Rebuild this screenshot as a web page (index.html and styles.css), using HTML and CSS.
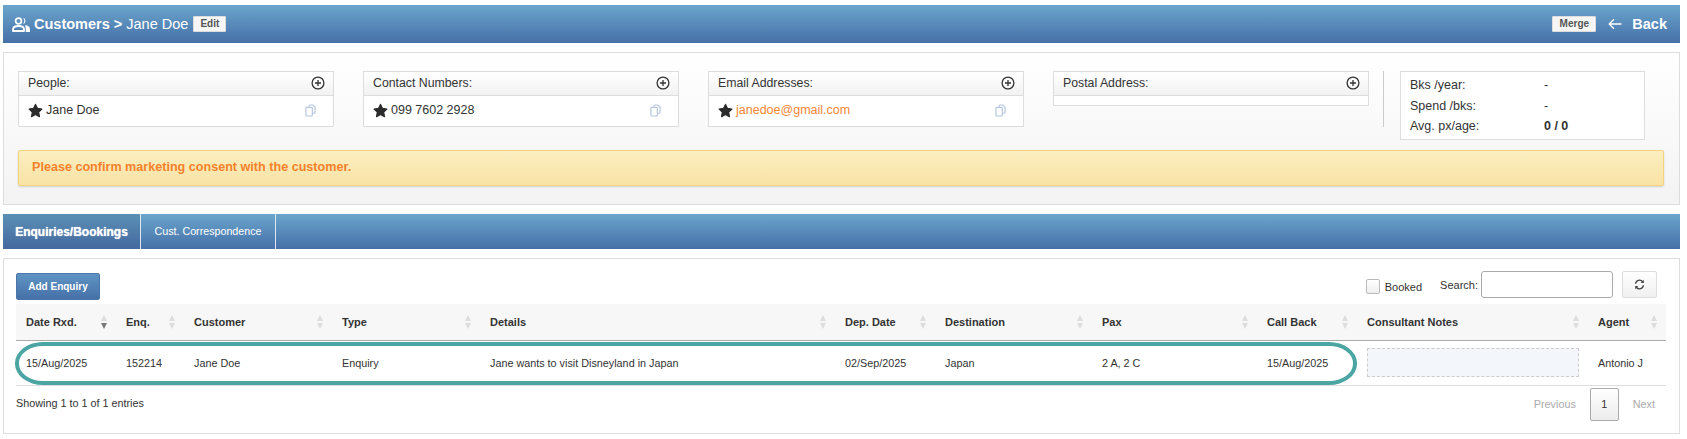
FILE: index.html
```html
<!DOCTYPE html>
<html>

<head>
	<title>Customers - Jane Doe</title>
	<meta charset="utf-8">
	<link rel="stylesheet" href="styles.css">
</head>

<body>
	<svg class="defs">
		<symbol id="star" viewBox="0 0 16 16">
			<polygon points="8,1.5 10.200,5.800 14.800,6.500 11.400,9.800 12.200,14.500 8,12.200 3.800,14.500 4.600,9.800 1.200,6.500 5.800,5.800" fill="#2b2b2b" stroke="#2b2b2b" stroke-width="1.300" stroke-linejoin="round" />
		</symbol>
		<symbol id="plus" viewBox="0 0 14 14">
			<circle cx="7" cy="7" r="5.900" fill="none" stroke="#333" stroke-width="1.300" />
			<path d="M7 4v6M4 7h6" stroke="#333" stroke-width="1.300" />
		</symbol>
		<symbol id="copy" viewBox="0 0 12 14">
			<path d="M4.500 3V2a1 1 0 0 1 1-1h3l2.500 2.500V9a1 1 0 0 1-1 1H8.500" fill="none" stroke="#b5c6e0" stroke-width="1.300" />
			<rect x="1" y="3.500" width="7" height="9.500" rx="1" fill="#fff" stroke="#b5c6e0" stroke-width="1.300" />
		</symbol>
	</svg>

	<div class="page">
		<div class="titlebar">
			<div class="title">
				<svg class="users-icon" viewBox="0 0 18 15">
					<circle cx="6.500" cy="4" r="2.900" fill="none" stroke="#fff" stroke-width="1.800" />
					<path d="M1 14v-1.500c0-2.400 2-3.500 5.500-3.500s5.500 1.100 5.500 3.500V14z" fill="none" stroke="#fff" stroke-width="1.800" stroke-linejoin="round" />
					<path d="M11 .8a3.300 3.300 0 0 1 0 6.400 5 5 0 0 0 0-6.400zM13 8.300c2.800.2 5 1.400 5 3.800V15h-4.300v-2.600c0-1.700-.2-2.900-.7-4.100z" fill="#fff" />
				</svg>
				<b>Customers &gt;</b> <span>Jane Doe</span>
				<button class="small-btn">Edit</button>
			</div>
			<div class="title-right">
				<button class="small-btn merge">Merge</button>
				<svg class="back-arrow" viewBox="0 0 14 12">
					<path d="M13.500 6H1.500M6 1.200 1.200 6 6 10.800" fill="none" stroke="#fff" stroke-width="1.300" />
				</svg>
				<b class="back">Back</b>
			</div>
		</div>

		<div class="info-panel">
			<div class="info-row">
				<div class="card">
					<div class="card-head">People:<svg class="plus"><use href="#plus" /></svg></div>
					<div class="card-body">
						<svg class="star"><use href="#star" /></svg>
						<span class="value">Jane Doe</span>
						<svg class="copy"><use href="#copy" /></svg>
					</div>
				</div>
				<div class="card">
					<div class="card-head">Contact Numbers:<svg class="plus"><use href="#plus" /></svg></div>
					<div class="card-body">
						<svg class="star"><use href="#star" /></svg>
						<span class="value">099 7602 2928</span>
						<svg class="copy"><use href="#copy" /></svg>
					</div>
				</div>
				<div class="card">
					<div class="card-head">Email Addresses:<svg class="plus"><use href="#plus" /></svg></div>
					<div class="card-body">
						<svg class="star"><use href="#star" /></svg>
						<span class="value email">janedoe@gmail.com</span>
						<svg class="copy"><use href="#copy" /></svg>
					</div>
				</div>
				<div class="card">
					<div class="card-head">Postal Address:<svg class="plus"><use href="#plus" /></svg></div>
					<div class="card-body empty"></div>
				</div>
				<div class="divider"></div>
				<div class="stats">
					<div>Bks /year:</div>
					<div>-</div>
					<div>Spend /bks:</div>
					<div>-</div>
					<div>Avg. px/age:</div>
					<div class="strong">0 / 0</div>
				</div>
			</div>
			<div class="alert">Please confirm marketing consent with the customer.</div>
		</div>

		<div class="tabbar">
			<div class="tab active">Enquiries/Bookings</div>
			<div class="tab">Cust. Correspondence</div>
		</div>

		<div class="list-panel">
			<div class="toolbar">
				<button class="add-btn">Add Enquiry</button>
				<div class="filters">
					<span class="checkbox"></span>
					<span class="booked">Booked</span>
					<span class="search-label">Search:</span>
					<span class="search-box"></span>
					<button class="refresh-btn">
						<svg viewBox="0 0 14 14">
							<path d="M2 6a5 5 0 0 1 9-2.500M12 8a5 5 0 0 1-9 2.500" fill="none" stroke="#444" stroke-width="1.700" />
							<path d="M12.500 1v4h-4zM1.500 13V9h4z" fill="#444" />
						</svg>
					</button>
				</div>
			</div>

			<div class="table-wrap">
				<table>
					<colgroup>
						<col class="c-date">
						<col class="c-enq">
						<col class="c-cust">
						<col class="c-type">
						<col class="c-details">
						<col class="c-dep">
						<col class="c-dest">
						<col class="c-pax">
						<col class="c-call">
						<col class="c-notes">
						<col class="c-agent">
					</colgroup>
					<thead>
						<tr>
							<th><div class="th-in">Date Rxd.<span class="sort desc"></span></div></th>
							<th><div class="th-in">Enq.<span class="sort"></span></div></th>
							<th><div class="th-in">Customer<span class="sort"></span></div></th>
							<th><div class="th-in">Type<span class="sort"></span></div></th>
							<th><div class="th-in">Details<span class="sort"></span></div></th>
							<th><div class="th-in">Dep. Date<span class="sort"></span></div></th>
							<th><div class="th-in">Destination<span class="sort"></span></div></th>
							<th><div class="th-in">Pax<span class="sort"></span></div></th>
							<th><div class="th-in">Call Back<span class="sort"></span></div></th>
							<th><div class="th-in">Consultant Notes<span class="sort"></span></div></th>
							<th><div class="th-in">Agent<span class="sort"></span></div></th>
						</tr>
					</thead>
					<tbody>
						<tr>
							<td>15/Aug/2025</td>
							<td>152214</td>
							<td>Jane Doe</td>
							<td>Enquiry</td>
							<td>Jane wants to visit Disneyland in Japan</td>
							<td>02/Sep/2025</td>
							<td>Japan</td>
							<td>2 A, 2 C</td>
							<td>15/Aug/2025</td>
							<td><div class="notes"></div></td>
							<td>Antonio J</td>
						</tr>
					</tbody>
				</table>
				<div class="highlight"></div>
			</div>

			<div class="table-foot">
				<div>Showing 1 to 1 of 1 entries</div>
				<div class="pager">
					<span class="page-link">Previous</span>
					<span class="page-num">1</span>
					<span class="page-link">Next</span>
				</div>
			</div>
		</div>
	</div>
</body>

</html>
```

FILE: styles.css
```css
body {
	margin: 0;
	background: #fff;
	color: #333;
	font-family: "Liberation Sans", Arial, sans-serif;
	font-size: 12px;
}

.defs {
	display: none;
}

.page {
	padding: 5px 7px 4px 3px;
}

.titlebar {
	height: 38px;
	padding: 0 13px 0 9px;
	display: flex;
	align-items: center;
	justify-content: space-between;
	color: white;
	font-size: 14.500px;
	background: linear-gradient(#6ba5cc, #4570a8);
}

.title {
	display: flex;
	align-items: center;
	gap: 4px;
}

.users-icon {
	width: 18px;
	height: 15px;
}

.small-btn {
	height: 16px;
	padding: 0 6px;
	border: 1px solid #ddd;
	border-radius: 1px;
	background: #f6f6f6;
	color: #555;
	font-family: inherit;
	font-size: 10px;
	font-weight: bold;
	line-height: 14px;
}

.title .small-btn {
	margin-left: 1px;
	width: 33px;
	padding: 0;
}

.title-right {
	display: flex;
	align-items: center;
}

.merge {
	width: 44px;
	padding: 0;
}

.back-arrow {
	width: 14px;
	height: 12px;
	margin-left: 12px;
}

.back {
	margin-left: 10px;
}

.info-panel {
	margin-top: 9px;
	height: 153px;
	box-sizing: border-box;
	padding: 18px 15px 0 14px;
	border: 1px solid #ddd;
	background: linear-gradient(#fff, #f3f3f3);
}

.info-row {
	display: flex;
	align-items: flex-start;
	height: 69px;
}

.card {
	width: 316px;
	box-sizing: border-box;
	margin-right: 29px;
	border: 1px solid #ddd;
	background: #fff;
}

.card:nth-child(4) {
	margin-right: 14px;
}

.card-head {
	height: 24px;
	box-sizing: border-box;
	padding: 0 8px 2px 9px;
	display: flex;
	align-items: center;
	justify-content: space-between;
	border-bottom: 1px solid #ddd;
	background: linear-gradient(#fff, #f2f2f2);
	color: #333;
	font-size: 12.300px;
}

.plus {
	width: 14px;
	height: 14px;
}

.card-body {
	height: 30px;
	box-sizing: border-box;
	padding: 0 17px 2px 9px;
	display: flex;
	align-items: center;
	font-size: 12.500px;
}

.card-body.empty {
	height: 9px;
}

.star {
	width: 15px;
	height: 15px;
	margin-right: 3px;
}

.value {
	flex: 1;
}

.email {
	color: #f58634;
}

.copy {
	width: 11px;
	height: 13px;
}

.divider {
	width: 1px;
	height: 56px;
	background: #ccc;
	margin-right: 16px;
}

.stats {
	width: 245px;
	height: 69px;
	box-sizing: border-box;
	padding: 3px 9px;
	display: grid;
	grid-template-columns: 134px auto;
	grid-auto-rows: 20.500px;
	align-items: center;
	border: 1px solid #ddd;
	background: #fff;
	font-size: 12.500px;
}

.strong {
	font-weight: bold;
}

.alert {
	margin-top: 10px;
	height: 36px;
	box-sizing: border-box;
	padding: 0 0 2px 13px;
	display: flex;
	align-items: center;
	border: 1px solid #f5d27e;
	border-radius: 2px;
	background: linear-gradient(#fbeec0, #f9e3a6);
	box-shadow: 0 1px 2px rgba(0, 0, 0, 0.15);
	color: #f5822a;
	font-size: 12.600px;
	font-weight: bold;
}

.tabbar {
	margin-top: 9px;
	height: 35px;
	display: flex;
	background: linear-gradient(#6ba5cc, #4570a8);
}

.tab {
	width: 134px;
	padding-bottom: 2px;
	display: flex;
	align-items: center;
	justify-content: center;
	border-right: 1px solid #dfe8f2;
	color: white;
	font-size: 10.700px;
}

.tab.active {
	width: 137px;
	padding-top: 1px;
	padding-bottom: 0;
	background: linear-gradient(#5a90b5, #44699f);
	font-weight: bold;
	font-size: 12px;
	text-shadow: 0 0 1px #fff;
}

.list-panel {
	margin-top: 9px;
	height: 176px;
	box-sizing: border-box;
	padding: 12px 13px 0 12px;
	border: 1px solid #ddd;
}

.toolbar {
	height: 33px;
	display: flex;
	justify-content: space-between;
	align-items: flex-start;
}

.add-btn {
	margin-top: 2px;
	width: 84px;
	height: 27px;
	padding: 0;
	border: 1px solid #4a76ad;
	border-radius: 2px;
	background: linear-gradient(#5f94c2, #4570a8);
	color: white;
	font-family: inherit;
	font-size: 10px;
	font-weight: bold;
}

.filters {
	display: flex;
	align-items: center;
	font-size: 11px;
	padding-right: 9px;
}

.checkbox {
	width: 14px;
	height: 15px;
	box-sizing: border-box;
	margin-top: 3px;
	border: 1px solid #bbb;
	border-radius: 2px;
	background: linear-gradient(#fff, #eee);
}

.booked {
	margin: 5px 0 0 5px;
}

.search-label {
	margin: 0 3px 0 18px;
}

.search-box {
	width: 130px;
	height: 25px;
	border: 1px solid #aaa;
	border-radius: 3px;
	background: #fff;
}

.refresh-btn {
	margin-left: 9px;
	width: 35px;
	height: 27px;
	padding: 0;
	display: flex;
	align-items: center;
	justify-content: center;
	border: 1px solid #ddd;
	border-radius: 2px;
	background: linear-gradient(#fff, #f0f0f0);
}

.refresh-btn svg {
	width: 11px;
	height: 11px;
}

.table-wrap {
	position: relative;
}

table {
	width: 1650px;
	table-layout: fixed;
	border-collapse: collapse;
	font-size: 10.800px;
}

.c-date { width: 100px; }
.c-enq { width: 68px; }
.c-cust { width: 148px; }
.c-type { width: 148px; }
.c-details { width: 355px; }
.c-dep { width: 100px; }
.c-dest { width: 157px; }
.c-pax { width: 165px; }
.c-call { width: 100px; }
.c-notes { width: 231px; }
.c-agent { width: 78px; }

th {
	height: 36px;
	box-sizing: border-box;
	padding: 0 9px 0 10px;
	background: #f7f7f7;
	border-bottom: 1px solid #aaa;
	font-size: 11px;
	text-align: left;
}

.th-in {
	display: flex;
	align-items: center;
	justify-content: space-between;
}

.sort {
	display: flex;
	flex-direction: column;
	gap: 2px;
}

.sort::before,
.sort::after {
	content: "";
	border-left: 3.500px solid transparent;
	border-right: 3.500px solid transparent;
}

.sort::before {
	border-bottom: 6px solid #ddd;
}

.sort::after {
	border-top: 6px solid #ddd;
}

.sort.desc::after {
	border-top-color: #777;
}

td {
	height: 45px;
	box-sizing: border-box;
	padding: 0 10px;
	border-bottom: 1px solid #ddd;
}

.notes {
	height: 29px;
	box-sizing: border-box;
	margin-right: -1px;
	border: 1px dashed #ccc;
	background: #f3f7fb;
}

.highlight {
	position: absolute;
	left: -1px;
	top: 38px;
	width: 1342px;
	height: 43px;
	box-sizing: border-box;
	border: 4px solid #4ba6a3;
	border-radius: 28px / 21px;
}

.table-foot {
	padding: 2px 11px 0 0;
	display: flex;
	justify-content: space-between;
	align-items: center;
	font-size: 10.800px;
}

.table-foot > div:first-child {
	margin-top: -2px;
}

.pager {
	display: flex;
	align-items: center;
}

.page-link {
	color: #aaa;
}

.page-num {
	width: 29px;
	height: 33px;
	box-sizing: border-box;
	margin: 0 14px;
	display: flex;
	align-items: center;
	justify-content: center;
	border: 1px solid #aaa;
	border-radius: 2px;
	background: linear-gradient(#fff, #ececec);
}
```
